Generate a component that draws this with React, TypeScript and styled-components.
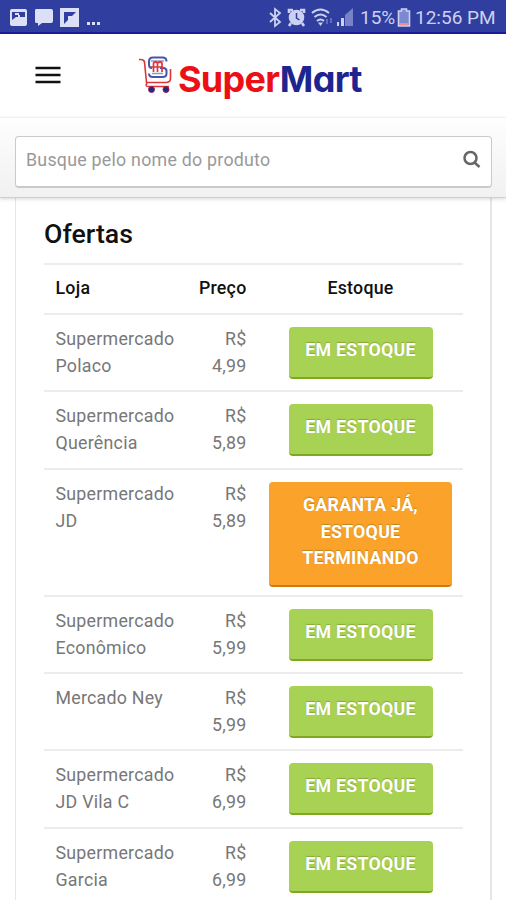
import React from 'react';
import styled, { createGlobalStyle } from 'styled-components';

const GlobalStyle = createGlobalStyle`
  * { box-sizing: border-box; }
  html, body { margin: 0; background: #fff; }
  body { font-family: Roboto, "Liberation Sans", sans-serif; color: #777; }
`;

const Screen = styled.div`
  width: 506px;
  height: 900px;
  overflow: hidden;
  display: flex;
  flex-direction: column;
  background: #fff;
`;

const StatusBar = styled.div`
  flex: none;
  height: 34px;
  display: flex;
  justify-content: space-between;
  padding: 0 11px 0 9px;
  background: #303f9f;
  border-bottom: 2px solid #1a1c9c;
  color: #ccd1f1;
`;

const StatusText = styled.span<{ $width: number; $gap?: number }>`
  width: ${p => p.$width}px;
  margin-left: ${p => p.$gap ?? 0}px;
  font-size: 19px;
  line-height: 36px;
  white-space: nowrap;
`;

const Header = styled.header`
  flex: none;
  height: 84px;
  display: flex;
  align-items: flex-start;
  padding: 20px 0 0 35px;
  border-bottom: 1px solid #f8f8f8;
`;

const MenuButton = styled.button`
  width: 26px;
  height: 18px;
  margin: 12px 77px 0 0;
  padding: 0;
  border: 0;
  background: none;
  svg { display: block; }
`;

const Logo = styled.div`
  display: flex;
  align-items: flex-start;
`;

const Wordmark = styled.div`
  margin: 0 0 0 4px;
  font: 700 36px/51px Inter, sans-serif;
  font-feature-settings: "cv11";
  letter-spacing: -0.7px;
  color: #ec1016;
`;

const WordmarkBlue = styled.span`
  color: #1f2590;
`;

const SearchBar = styled.div`
  flex: none;
  height: 80px;
  padding: 18px 14px 0 15px;
  background: linear-gradient(#fefefe, #f1f1f1);
  border-bottom: 1px solid #cfcfcf;
  box-shadow: 0 1px 4px rgba(0, 0, 0, 0.16);
  z-index: 1;
`;

const SearchField = styled.div`
  height: 52px;
  display: flex;
  align-items: center;
  justify-content: space-between;
  padding: 0 10px 4px;
  background: #fff;
  border: 1px solid #cacaca;
  border-width: 1px 1.5px 2px 1.5px;
  border-radius: 4px;
  font-size: 17.8px;
  letter-spacing: 0.25px;
  color: #999;
`;

const Card = styled.section`
  flex: none;
  width: 477px;
  height: 720px;
  margin-left: 15px;
  padding: 21px 27px 0;
  border: 2px solid #e6e6e6;
  border-width: 0 2px 0 1px;
`;

const Title = styled.h2`
  margin: 0 0 13px 1px;
  font-size: 26.7px;
  line-height: 31px;
  font-weight: 500;
  letter-spacing: 0;
  color: #111;
`;

const Row = styled.div<{ $height: number }>`
  width: 419px;
  margin-left: 1px;
  height: ${p => p.$height}px;
  display: grid;
  grid-template-columns: 143px 71px 205px;
  align-items: start;
  padding-top: 11px;
  border-top: 2px solid #ececec;
  font-size: 17.8px;
  line-height: 26.7px;
  letter-spacing: 0.25px;
`;

const HeadRow = styled(Row)`
  padding-top: 10px;
  font-weight: 500;
  color: #111;
`;

const Store = styled.div`
  padding-left: 11.5px;
`;

const Price = styled.div`
  padding: 0 11.5px 0 10px;
  text-align: right;
`;

const Stock = styled.div`
  display: flex;
  justify-content: center;
`;

const StockButton = styled.button<{ $low?: boolean }>`
  width: ${p => (p.$low ? 183 : 144)}px;
  height: ${p => (p.$low ? 105 : 52)}px;
  margin-top: 1px;
  padding: 10px 15px 14px;
  border: 0;
  border-bottom: 2px solid ${p => (p.$low ? '#cc7a18' : '#7fa81f')};
  border-radius: 4px;
  background: ${p => (p.$low ? '#faa22a' : '#a8d254')};
  color: #fff;
  font: 700 17.8px/26.7px Roboto, sans-serif;
  letter-spacing: 0.25px;
  text-shadow: 0 -1px 1px rgba(80, 90, 0, 0.35);
  text-transform: uppercase;
  white-space: pre-line;
`;

const Icon = styled.svg<{ $gap?: number; $top?: number }>`
  flex: none;
  display: block;
  margin-left: ${p => p.$gap ?? 0}px;
  margin-top: ${p => p.$top ?? 0}px;
`;

const Group = styled.div`
  display: flex;
  align-items: flex-start;
`;

const Notifications = () => (
  <Icon width="96" height="32" viewBox="9 0 96 32" fill="#dce0f6">
    <path fillRule="evenodd" d="M12 9h13q2 0 2 2v13q0 2-2 2H12q-2 0-2-2V11q0-2 2-2zM12 12v8l4-3 2 0 0-2h2v2h5v-5z" />
    <path d="M15 13h4v2h-4z" />
    <path d="M36 9h15q2 0 2 2v10q0 2-2 2h-9l-4 3v-3h-2q-1 0-1-2V11q0-2 1-2z" />
    <path fillRule="evenodd" d="M60 8h19v19H60zm4 4v12l4-4v-4h4l4-4z" />
    <path d="M87 22h3v3h-3zm5 0h3v3h-3zm5 0h3v3h-3z" />
  </Icon>
);

const SystemIcons = () => (
  <Icon width="86" height="32" viewBox="268 0 86 32" fill="none" stroke="#ccd1f1" strokeWidth="2">
    <path d="M270 13l10 9-5 4V9l5 4-10 9" strokeWidth="1.8" />
    <circle cx="296.500" cy="17.500" r="6.800" fill="#ccd1f1" />
    <path d="M289 13v-3h4M300 10h4v3M291 23l-2 3M302 23l2 3" strokeWidth="2.600" />
    <path d="M296.500 13v5l3 2" stroke="#303f9f" strokeWidth="1.500" />
    <path d="M312 13q8.500-7 17 0M314.500 17q6-5 12 0M317 21q3.500-3 7 0" />
    <path d="M318 22.500h5l-2.500 3.500z" fill="#ccd1f1" stroke="none" />
    <path d="M327 19v5M331 18v5" stroke="#5f6bbd" />
    <path d="M345 15l8-7v18h-8z" fill="#7782c9" stroke="none" />
    <path d="M337 22h2v4h-2zM341 18h3v8h-3z" fill="#ccd1f1" stroke="none" />
  </Icon>
);

const Battery = () => (
  <Icon $gap={1} width="14" height="32" viewBox="0 0 14 32">
    <path d="M4.500 9h5v2h3v15h-11V11h3z" fill="#7c88cf" stroke="#ccd1f1" strokeWidth="1.600" />
    <path d="M2.500 23h9v2h-9z" fill="#ed8c95" />
  </Icon>
);

const Cart = () => (
  <Icon $top={2} width="36" height="40" viewBox="138 56 36 40" fill="none" stroke="#e0343b" strokeWidth="1.600">
    <path d="M139 59.500q5-.5 5.500 2.500l2 20.500h20q4-.5 4-4V69" />
    <path d="M147 83q-2 3.500 1 3.500h21" />
    <path d="M166.500 61.500q0-4-4-4h-9.500q-4 0-4 4v3q0 3.500 3 3.500M160 68h3q3.500 0 3.500 3v2.500q0 3.500-4 3.500h-9.500q-4 0-4-3.500" stroke="#4856a8" strokeWidth="2" />
    <path d="M151 61h13M152 73.500h11" stroke="#8d97cc" strokeWidth="1.400" />
    <path d="M153.500 72v-9q2-2 4 0v9M157.500 63q3-2 4.500 0v9M151 67h12" strokeWidth="1.700" />
    <circle cx="151.500" cy="89.500" r="3" fill="#28277e" stroke="#8b254e" strokeWidth="1" />
    <circle cx="166" cy="89.500" r="3" fill="#28277e" stroke="#8b254e" strokeWidth="1" />
  </Icon>
);

const offers = [
  { store: 'Supermercado Polaco', price: '4,99', height: 77 },
  { store: 'Supermercado Querência', price: '5,89', height: 78 },
  { store: 'Supermercado JD', price: '5,89', low: true, height: 127 },
  { store: 'Supermercado Econômico', price: '5,99', height: 77 },
  { store: 'Mercado Ney', price: '5,99', height: 77 },
  { store: 'Supermercado JD Vila C', price: '6,99', height: 78 },
  { store: 'Supermercado Garcia', price: '6,99', height: 77 },
];

export default function App() {
  return (
    <>
      <GlobalStyle />
      <Screen>
        <StatusBar>
          <Notifications />
          <Group>
            <SystemIcons />
            <StatusText $width={36} $gap={6}>15%</StatusText>
            <Battery />
            <StatusText $width={80} $gap={4}>12:56 PM</StatusText>
          </Group>
        </StatusBar>
        <Header>
          <MenuButton aria-label="Menu">
            <svg width="26" height="18" stroke="#111" strokeWidth="2.600">
              <path d="M.5 2h25M.5 9h25M.5 16h25" />
            </svg>
          </MenuButton>
          <Logo>
            <Cart />
            <Wordmark>Super<WordmarkBlue>Mart</WordmarkBlue></Wordmark>
          </Logo>
        </Header>
        <SearchBar>
          <SearchField>
            Busque pelo nome do produto
            <Icon width="19" height="19" viewBox="0 0 19 19" fill="none" stroke="#666" strokeWidth="2.500">
              <circle cx="8.500" cy="8" r="6" />
              <path d="M12.500 12.500l5 4.500" />
            </Icon>
          </SearchField>
        </SearchBar>
        <Card>
          <Title>Ofertas</Title>
          <HeadRow $height={50}>
            <Store>Loja</Store>
            <Price>Preço</Price>
            <Stock>Estoque</Stock>
          </HeadRow>
          {offers.map(o => (
            <Row key={o.store} $height={o.height}>
              <Store>{o.store}</Store>
              <Price>R$ {o.price}</Price>
              <Stock>
                <StockButton $low={o.low}>
                  {o.low ? 'Garanta já,\nestoque\nterminando' : 'Em estoque'}
                </StockButton>
              </Stock>
            </Row>
          ))}
        </Card>
      </Screen>
    </>
  );
}
